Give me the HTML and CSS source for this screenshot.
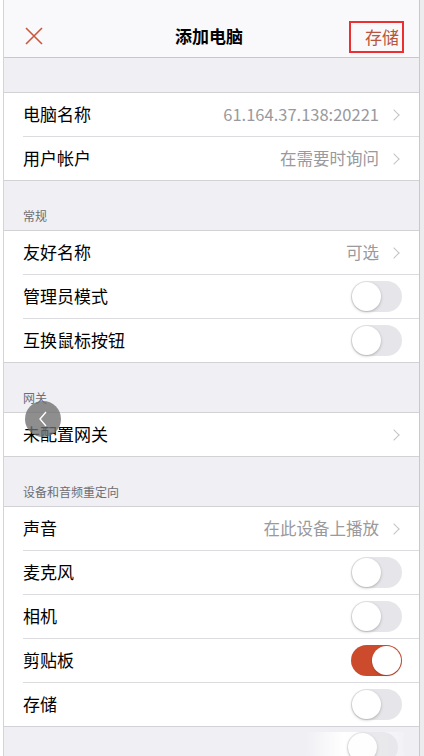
FILE: index.html
```html
<!DOCTYPE html>
<html lang="zh-CN">
<head>
  <meta charset="UTF-8">
  <title>添加电脑</title>
  <meta name="viewport" content="width=device-width, initial-scale=1.0"/>
  <link rel="stylesheet" href="styles.css">
</head>
<body>
  <div class="frame">
    <div class="navbar">
      <svg class="close" width="18" height="18" viewBox="0 0 18 18">
        <path d="M1 1 L17 17 M17 1 L1 17" stroke="#c9583b" stroke-width="1.6" fill="none"/>
      </svg>
      <div class="title">添加电脑</div>
      <div class="save"><span>存储</span></div>
    </div>

    <div class="spacer"></div>
    <div class="group">
      <div class="row"><span class="label">电脑名称</span><span class="value">61.164.37.138:20221</span><i class="chev"></i></div>
      <div class="row"><span class="label">用户帐户</span><span class="value">在需要时询问</span><i class="chev"></i></div>
    </div>

    <div class="section">常规</div>
    <div class="group">
      <div class="row"><span class="label">友好名称</span><span class="value">可选</span><i class="chev"></i></div>
      <div class="row"><span class="label">管理员模式</span><span class="toggle"></span></div>
      <div class="row"><span class="label">互换鼠标按钮</span><span class="toggle"></span></div>
    </div>

    <div class="section">网关</div>
    <div class="group">
      <div class="row"><span class="label">未配置网关</span><span class="value"></span><i class="chev"></i></div>
    </div>

    <div class="section">设备和音频重定向</div>
    <div class="group">
      <div class="row"><span class="label">声音</span><span class="value">在此设备上播放</span><i class="chev"></i></div>
      <div class="row"><span class="label">麦克风</span><span class="toggle"></span></div>
      <div class="row"><span class="label">相机</span><span class="toggle"></span></div>
      <div class="row"><span class="label">剪贴板</span><span class="toggle on"></span></div>
      <div class="row"><span class="label">存储</span><span class="toggle"></span></div>
    </div>
    <div class="tail"></div>

    <div class="back-bubble">
      <svg width="10" height="16" viewBox="0 0 10 16"><path d="M8 1 L2 8 L8 15" stroke="#fff" stroke-width="1.4" fill="none"/></svg>
    </div>
    <div class="ghost"><span class="toggle"></span></div>
  </div>
</body>
</html>
```

FILE: styles.css
```css
html, body { margin: 0; padding: 0; background: #fff; }
body { font-family: "Noto Sans CJK SC", "Noto Sans", sans-serif; color: #000; height: 756px; overflow: hidden; }
.frame { position: relative; margin-left: 3px; width: 415px; height: 756px; background: #efeff4; border-left: 1px solid #d4d4d8; border-right: 1px solid #c9c9cc; box-shadow: 4px 0 0 #ececee; overflow: hidden; }

.navbar { height: 44px; padding: 13px 15px 0 21px; background: #f9f9fb; border-bottom: 1px solid #c8c7cc; display: flex; align-items: center; }
.close { margin-top: 1px; }
.title { flex: 1; text-align: center; font-size: 17px; font-weight: bold; margin-left: 26px; }
.save { border: 2px solid #ec2f30; width: 48px; height: 28px; display: flex; align-items: center; justify-content: flex-end; padding-right: 3px; box-sizing: content-box; margin-top: 3px; }
.save span { color: #b9553b; font-size: 17px; line-height: 20px; }

.spacer { height: 34px; }
.group { background: #fff; border-top: 1px solid #d1d1d6; border-bottom: 1px solid #d1d1d6; }
.row { height: 43px; display: flex; align-items: center; padding: 0 17px 0 19px; position: relative; }
.row + .row { border-top: 1px solid #dcdce0; margin-left: 19px; padding-left: 0; }
.label { font-size: 17px; flex: 1; white-space: nowrap; margin-top: -2px; }
.value { font-size: 16.5px; color: #99999e; margin-right: 11px; white-space: nowrap; margin-top: -2px; }
.chev { width: 7px; height: 7px; border-top: 1.5px solid #c4c4c8; border-right: 1.5px solid #c4c4c8; transform: rotate(45deg); margin-right: 4px; }

.section { height: 49px; box-sizing: border-box; padding: 27px 0 0 19px; font-size: 12px; line-height: 16px; color: #6d6d72; }

.toggle { display: inline-block; width: 51px; height: 31px; border-radius: 16px; background: #e6e6ea; position: relative; box-sizing: border-box; }
.toggle::after { content: ""; position: absolute; left: 1px; top: 1px; width: 29px; height: 29px; border-radius: 50%; background: #fff; box-shadow: 0 1px 3px rgba(0,0,0,0.25); }
.toggle.on { background: #cc4b2c; }
.toggle.on::after { left: 21px; box-shadow: 0 1px 2px rgba(0,0,0,0.2); }

.tail { height: 40px; }

.back-bubble { position: absolute; left: 21px; top: 401px; width: 36px; height: 36px; border-radius: 50%; background: rgba(110,110,110,0.78); display: flex; align-items: center; justify-content: center; }
.ghost { position: absolute; left: 300px; top: 732px; width: 100px; height: 40px; background: linear-gradient(90deg, rgba(255,255,255,0) 0%, #fff 40%, rgba(255,255,255,0.2) 100%); display: flex; justify-content: flex-end; }
.ghost .toggle { opacity: 0.8; margin-right: 6px; }
```
